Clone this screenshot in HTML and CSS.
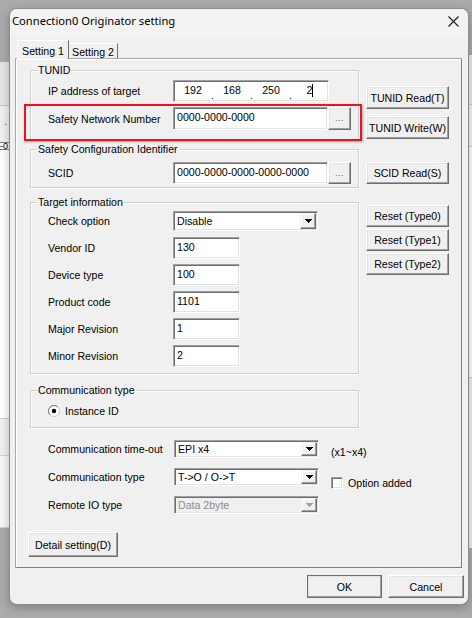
FILE: index.html
```html
<!DOCTYPE html>
<html>
<head>
<meta charset="utf-8">
<title>Connection0 Originator setting</title>
<link rel="stylesheet" href="styles.css">
</head>
<body>
<div class="bgapp bg-left">
  <div class="bl-a"></div>
  <div class="bl-b"><span class="bl-dot">.</span></div>
  <div class="bl-c"><span>-0</span></div>
  <div class="bl-d"></div>
  <div class="bl-e"></div>
  <div class="bl-f"></div>
</div>
<div class="bgapp bg-right">
  <div class="br-a"></div>
  <div class="br-b"></div>
  <div class="br-c"></div>
  <div class="br-d"></div>
</div>

<div class="dialog">
  <div class="titlebar">
    <span class="title">Connection0 Originator setting</span>
    <svg class="close" width="11" height="11" viewBox="0 0 11 11"><path d="M0.5 0.5L10.5 10.5M10.5 0.5L0.5 10.5" stroke="#1c1c1c" stroke-width="1.1" fill="none"/></svg>
  </div>
  <div class="tabs">
    <div class="tab active">Setting 1</div>
    <div class="tab">Setting 2</div>
  </div>
  <div class="panel">
    <div class="section">
      <div class="group g-tunid">
        <span class="legend">TUNID</span>
        <div class="row r22">
          <span class="lbl">IP address of target</span>
          <div class="edit ip">
            <span class="oct">192</span><span class="dot">.</span><span class="oct">168</span><span class="dot">.</span><span class="oct">250</span><span class="dot">.</span><span class="oct">2<span class="caret"></span></span>
          </div>
        </div>
        <div class="row r23 mt5">
          <span class="lbl">Safety Network Number</span>
          <div class="edit long">0000-0000-0000</div>
          <button class="btn dots">...</button>
        </div>
      </div>
      <div class="side side-tunid">
        <button class="btn sbtn h23">TUNID Read(T)</button>
        <button class="btn sbtn h23">TUNID Write(W)</button>
      </div>
    </div>

    <div class="section sec-scid">
      <div class="group g-scid">
        <span class="legend">Safety Configuration Identifier</span>
        <div class="row r22">
          <span class="lbl">SCID</span>
          <div class="edit long">0000-0000-0000-0000-0000</div>
          <button class="btn dots">...</button>
        </div>
      </div>
      <div class="side side-scid">
        <button class="btn sbtn h22">SCID Read(S)</button>
      </div>
    </div>

    <div class="section sec-target">
      <div class="group g-target">
        <span class="legend">Target information</span>
        <div class="row r22">
          <span class="lbl">Check option</span>
          <div class="combo c-check"><span class="ctext">Disable</span><span class="arrow"><svg width="7" height="4" viewBox="0 0 7 4"><path d="M0 0h7v1h-1v1h-1v1h-1v1h-1v-1h-1v-1h-1v-1h-1z" fill="#000"/></svg></span></div>
        </div>
        <div class="row r22"><span class="lbl">Vendor ID</span><div class="edit short">130</div></div>
        <div class="row r22"><span class="lbl">Device type</span><div class="edit short">100</div></div>
        <div class="row r22"><span class="lbl">Product code</span><div class="edit short">1101</div></div>
        <div class="row r22"><span class="lbl">Major Revision</span><div class="edit short">1</div></div>
        <div class="row r22"><span class="lbl">Minor Revision</span><div class="edit short">2</div></div>
      </div>
      <div class="side side-target">
        <button class="btn sbtn h22">Reset (Type0)</button>
        <button class="btn sbtn h22">Reset (Type1)</button>
        <button class="btn sbtn h22">Reset (Type2)</button>
      </div>
    </div>

    <div class="group g-comm">
      <span class="legend">Communication type</span>
      <div class="radio-row">
        <svg class="radio" width="12" height="12" viewBox="0 0 12 12">
          <circle cx="6" cy="6" r="5.5" fill="#fff" stroke="#c8c8c8"/>
          <path d="M2.1 9.9A5.5 5.5 0 0 1 9.9 2.1" fill="none" stroke="#7a7a7a"/>
          <circle cx="6" cy="6" r="2.2" fill="#000"/>
        </svg>
        <span>Instance ID</span>
      </div>
    </div>

    <div class="lower">
      <div class="lrow">
        <span class="lbl">Communication time-out</span>
        <div class="combo c-low"><span class="ctext">EPI x4</span><span class="arrow"><svg width="7" height="4" viewBox="0 0 7 4"><path d="M0 0h7v1h-1v1h-1v1h-1v1h-1v-1h-1v-1h-1v-1h-1z" fill="#000"/></svg></span></div>
        <span class="note">(x1~x4)</span>
      </div>
      <div class="lrow">
        <span class="lbl">Communication type</span>
        <div class="combo c-low"><span class="ctext">T-&gt;O / O-&gt;T</span><span class="arrow"><svg width="7" height="4" viewBox="0 0 7 4"><path d="M0 0h7v1h-1v1h-1v1h-1v1h-1v-1h-1v-1h-1v-1h-1z" fill="#000"/></svg></span></div>
        <span class="check"><span class="cbox"></span><span>Option added</span></span>
      </div>
      <div class="lrow">
        <span class="lbl">Remote IO type</span>
        <div class="combo c-low disabled"><span class="ctext">Data 2byte</span><span class="arrow"><svg width="7" height="4" viewBox="0 0 7 4"><path d="M0 0h7v1h-1v1h-1v1h-1v1h-1v-1h-1v-1h-1v-1h-1z" fill="#a0a0a0"/></svg></span></div>
      </div>
    </div>

    <button class="btn detail">Detail setting(D)</button>
  </div>

  <div class="footer">
    <button class="btn ok">OK</button>
    <button class="btn cancel">Cancel</button>
  </div>

  <div class="highlight"></div>
</div>
</body>
</html>
```

FILE: styles.css
```css
* { box-sizing: border-box; }
html, body { margin: 0; padding: 0; }
body {
  width: 472px;
  height: 618px;
  overflow: hidden;
  position: relative;
  background: #ababab;
  font-family: "Liberation Sans", Arial, sans-serif;
  font-size: 10.6px;
  color: #000;
}
button {
  font: inherit;
  color: inherit;
  margin: 0;
  padding: 0;
  cursor: default;
}

/* background application windows (desktop) */
.bgapp { position: absolute; display: flex; flex-direction: column; overflow: hidden; }
.bg-left { left: 0; top: 62px; width: 14px; height: 466px; }
.bl-a { height: 43px; background: #e6e6e6; }
.bl-b { height: 37px; background: #f0f0f0; border-top: 1px solid #c4c4c4; position: relative; }
.bl-dot { display: block; padding: 10px 0 0 4px; line-height: 10px; color: #555; }
.bl-c { height: 8px; background: #fff; border-top: 1px solid #7a7a7a; border-bottom: 1px solid #7a7a7a; line-height: 7px; font-size: 9px; text-align: right; padding-right: 6px; }
.bl-d { height: 268px; background: #fff; }
.bl-e { height: 38px; background: #f0f0f0; border-top: 1px solid #d0d0d0; border-bottom: 1px solid #d0d0d0; }
.bl-f { flex: 1; background: #f8f8f8; border-bottom: 1px solid #d0d0d0; }

.bg-right { left: 462px; top: 55px; width: 10px; height: 493px; }
.br-a { height: 50px; background: #ececec; border-bottom: 1px solid #c8c8c8; }
.br-b { height: 42px; background: #f4f4f4; border-bottom: 1px solid #c8c8c8; }
.br-c { height: 230px; background: #fff; }
.br-d { flex: 1; background: #f0f0f0; border-top: 1px solid #d0d0d0; }

/* dialog */
.dialog {
  position: absolute;
  left: 9px;
  top: 8px;
  width: 460px;
  height: 597px;
  background: #f0f0f0;
  border: 1px solid #8c8c8c;
  border-radius: 8px;
  box-shadow: 0 3px 10px rgba(0,0,0,0.25);
  display: flex;
  flex-direction: column;
}
.titlebar {
  height: 28px;
  flex: none;
  display: flex;
  align-items: flex-start;
  padding: 4px 9px 0 2px;
  background: #f3f3f3;
  border-radius: 7px 7px 0 0;
}
.title {
  font-family: "Noto Sans", "Open Sans", sans-serif;
  font-size: 11.2px;
  line-height: 16px;
  color: #000;
  white-space: nowrap;
}
.close { margin-left: auto; margin-top: 3px; }

.tabs {
  height: 21px;
  flex: none;
  display: flex;
  align-items: flex-end;
  padding-left: 7px;
}
.tab {
  display: flex;
  align-items: center;
  justify-content: center;
  background: #f0f0f0;
  border-top: 1px solid #fff;
  border-right: 1px solid #6e6e6e;
  white-space: nowrap;
}
.tab.active {
  width: 52px;
  height: 19px;
  margin-bottom: -1px;
  border-left: 1px solid #fff;
  position: relative;
  z-index: 1;
  padding-top: 1px;
}
.tab:not(.active) { width: 49px; height: 15px; padding-top: 1px; }

.panel {
  flex: none;
  margin-left: 5px;
  width: 447px;
  height: 510px;
  border: 1px solid;
  border-color: #a8a8a8 #7e7e7e #7e7e7e #a8a8a8;
  box-shadow: inset 1px 1px 0 #fff;
  padding: 11px 0 0 14px;
  display: flex;
  flex-direction: column;
  align-items: flex-start;
}

.section { display: flex; align-items: flex-start; }
.sec-scid { margin-top: 9px; }
.sec-target { margin-top: 14px; }

.group {
  position: relative;
  width: 329px;
  border: 1px solid #cfcfcf;
  box-shadow: inset 1px 1px 0 #fff, 1px 1px 0 #fff;
  padding-left: 17px;
  flex: none;
}
.legend {
  position: absolute;
  top: -7px;
  left: 6px;
  line-height: 13px;
  padding: 0 1px;
  background: #f0f0f0;
  white-space: nowrap;
}
.g-tunid { height: 70px; padding-top: 9px; }
.g-scid { height: 39px; padding-top: 12px; }
.g-target { height: 172px; padding-top: 7px; display: flex; flex-direction: column; gap: 5px; }
.g-comm { height: 38px; padding-top: 13px; margin-top: 16px; }

.row { display: flex; align-items: center; }
.r22 { height: 22px; }
.r23 { height: 23px; }
.mt5 { margin-top: 5px; }
.lbl { width: 125px; flex: none; white-space: nowrap; }

/* sunken edit */
.edit {
  height: 100%;
  background: #fff;
  border: 1px solid;
  border-color: #a0a0a0 #fff #fff #a0a0a0;
  box-shadow: inset 1px 1px 0 #6e6e6e, inset -1px -1px 0 #e3e3e3;
  padding: 2px 0 0 3px;
  line-height: 14px;
  white-space: nowrap;
}
.edit.long { width: 155px; }
.edit.short { width: 67px; }
.edit.ip { width: 156px; display: flex; padding: 2px 0 0 1px; }
.oct { width: 36px; text-align: center; display: flex; justify-content: center; align-items: flex-start; }
.dot { width: 3px; text-align: center; padding-top: 5px; }
.caret { display: inline-block; width: 1px; height: 13px; background: #000; margin-top: 1px; }

/* raised button */
.btn {
  display: flex;
  align-items: center;
  justify-content: center;
  background: #f0f0f0;
  border: 1px solid;
  border-color: #fff #6e6e6e #6e6e6e #fff;
  box-shadow: inset -1px -1px 0 #a0a0a0, inset 1px 1px 0 #e3e3e3;
  white-space: nowrap;
}
.dots {
  width: 23px;
  height: 100%;
  flex: none;
  color: #606060;
  font-size: 9px;
  align-items: flex-start;
  padding-top: 5px;
  letter-spacing: 0.5px;
}

.side { display: flex; flex-direction: column; margin-left: 7px; width: 83px; }
.sbtn { width: 83px; }
.h22 { height: 22px; }
.h23 { height: 23px; }
.side-tunid { padding-top: 16px; gap: 7px; }
.side-scid { padding-top: 13px; }
.side-target { padding-top: 3px; gap: 2px; }

/* combo box */
.combo {
  display: flex;
  width: 145px;
  background: #fff;
  border: 1px solid;
  border-color: #a0a0a0 #fff #fff #a0a0a0;
  box-shadow: inset 1px 1px 0 #6e6e6e, inset -1px -1px 0 #e3e3e3;
  padding: 1px 1px 1px 1px;
}
.c-check { height: 20px; }
.c-low { height: 18px; }
.ctext { flex: 1; padding-left: 2px; display: flex; align-items: center; white-space: nowrap; }
.arrow {
  width: 16px;
  flex: none;
  display: flex;
  align-items: center;
  justify-content: center;
  background: #f0f0f0;
  border: 1px solid;
  border-color: #f0f0f0 #6e6e6e #6e6e6e #f0f0f0;
  box-shadow: inset -1px -1px 0 #a0a0a0, inset 1px 1px 0 #fff;
}
.combo.disabled { background: #f0f0f0; }
.combo.disabled .ctext { color: #8c8c8c; }

.radio-row { display: flex; align-items: center; height: 14px; gap: 5px; margin-left: 0px; }

.lower { display: flex; flex-direction: column; gap: 10px; margin-top: 12px; padding-left: 18px; }
.lrow { display: flex; align-items: center; height: 18px; }
.lrow .lbl { width: 126px; }
.note { margin-left: 12px; margin-top: 5px; white-space: nowrap; }
.check { display: flex; align-items: center; gap: 5px; margin-left: 12px; margin-top: 12px; white-space: nowrap; }
.cbox {
  width: 12px;
  height: 12px;
  background: #fff;
  border: 1px solid;
  border-color: #a0a0a0 #fff #fff #a0a0a0;
  box-shadow: inset 1px 1px 0 #6e6e6e, inset -1px -1px 0 #e3e3e3;
}

.detail { width: 90px; height: 25px; margin-top: 18px; margin-left: -2px; }

.footer { display: flex; justify-content: flex-end; gap: 6px; padding: 7px 4px 0 0; }
.ok { width: 75px; height: 23px; border-color: #fff #555 #555 #fff; outline: 1px solid #6e6e6e; outline-offset: -1px; }
.cancel { width: 76px; height: 23px; }

/* annotation */
.highlight {
  position: absolute;
  left: 14px;
  top: 95px;
  width: 338px;
  height: 37px;
  border: 2px solid #e8151c;
  box-shadow: 1px 1px 2px rgba(0,0,0,0.3);
  pointer-events: none;
}
```
